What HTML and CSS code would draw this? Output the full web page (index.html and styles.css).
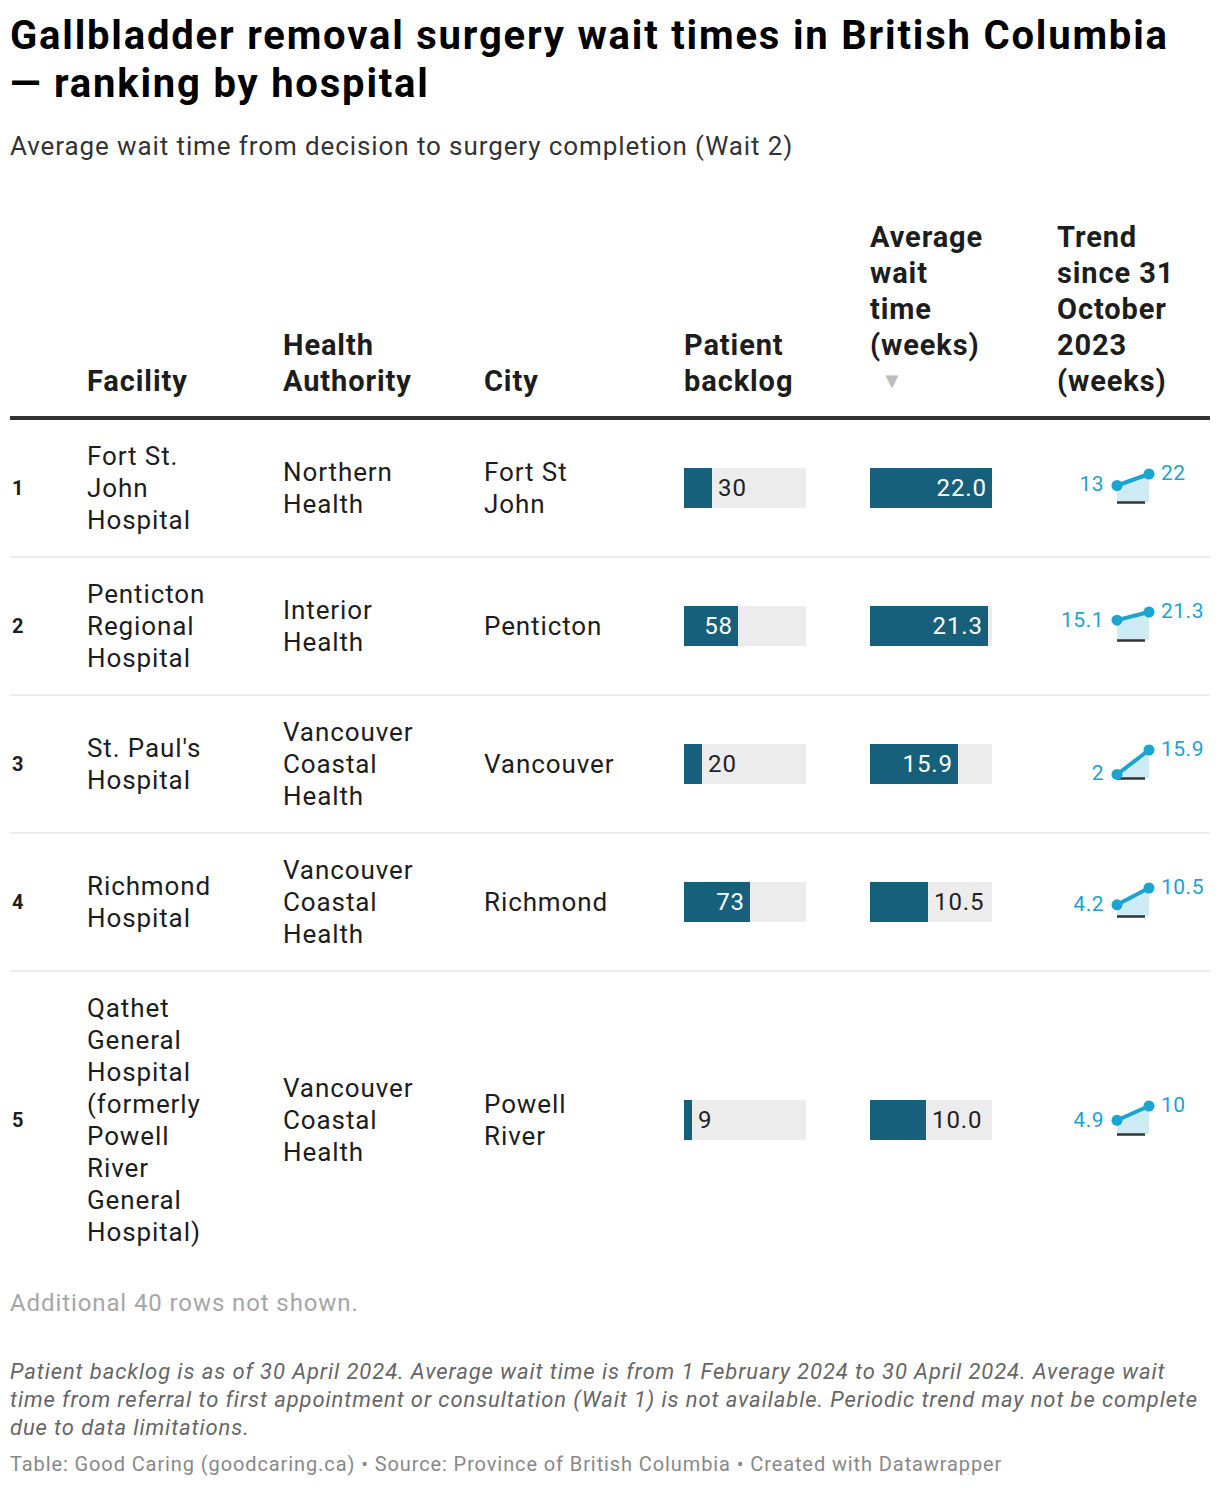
FILE: index.html
```html
<!DOCTYPE html>
<html lang="en">
<head>
<meta charset="utf-8">
<title>Gallbladder removal surgery wait times</title>
<link rel="stylesheet" href="styles.css">
</head>
<body>
<div class="wrap">
  <h1 class="title">Gallbladder removal surgery wait times in British Columbia —&nbsp;ranking by hospital</h1>
  <p class="subtitle">Average wait time from decision to surgery completion (Wait 2)</p>

  <div class="table">
    <div class="row head">
      <div class="c rank"></div>
      <div class="c txt">Facility</div>
      <div class="c txt">Health Authority</div>
      <div class="c txt">City</div>
      <div class="c txt">Patient backlog</div>
      <div class="c txt narrow">Average wait time (weeks)<span class="sort">▼</span></div>
      <div class="c txt">Trend since 31 October 2023 (weeks)</div>
    </div>

    <div class="row">
      <div class="c rank">1</div>
      <div class="c txt">Fort St. John Hospital</div>
      <div class="c txt">Northern Health</div>
      <div class="c txt">Fort St John</div>
      <div class="c"><div class="track"><div class="fill" style="width:28px"></div><span class="lbl out">30</span></div></div>
      <div class="c"><div class="track"><div class="fill" style="width:122px"><span class="lbl in">22.0</span></div></div></div>
      <div class="c trend">
        <svg class="spark" width="153" height="56" viewBox="0 0 153 56">
          <polygon class="area" points="60,25.5 92,14 92,42 60,42"/>
          <line class="base" x1="60" y1="42.5" x2="88" y2="42.5"/>
          <polyline class="ln" points="60,25.5 92,14"/>
          <circle class="dot" cx="60" cy="25.5" r="5.5"/>
          <circle class="dot" cx="92" cy="14" r="5.5"/>
          <text class="sl" x="47" y="23" text-anchor="end" dy="0.36em">13</text>
          <text class="sl" x="104" y="12" dy="0.36em">22</text>
        </svg>
      </div>
    </div>

    <div class="row">
      <div class="c rank">2</div>
      <div class="c txt">Penticton Regional Hospital</div>
      <div class="c txt">Interior Health</div>
      <div class="c txt">Penticton</div>
      <div class="c"><div class="track"><div class="fill" style="width:54px"><span class="lbl in">58</span></div></div></div>
      <div class="c"><div class="track"><div class="fill" style="width:118px"><span class="lbl in">21.3</span></div></div></div>
      <div class="c trend">
        <svg class="spark" width="153" height="56" viewBox="0 0 153 56">
          <polygon class="area" points="60,22.15 92,14 92,42 60,42"/>
          <line class="base" x1="60" y1="42.5" x2="88" y2="42.5"/>
          <polyline class="ln" points="60,22.15 92,14"/>
          <circle class="dot" cx="60" cy="22.15" r="5.5"/>
          <circle class="dot" cx="92" cy="14" r="5.5"/>
          <text class="sl" x="47" y="21" text-anchor="end" dy="0.36em">15.1</text>
          <text class="sl" x="104" y="12" dy="0.36em">21.3</text>
        </svg>
      </div>
    </div>

    <div class="row">
      <div class="c rank">3</div>
      <div class="c txt">St. Paul's Hospital</div>
      <div class="c txt">Vancouver Coastal Health</div>
      <div class="c txt">Vancouver</div>
      <div class="c"><div class="track"><div class="fill" style="width:18px"></div><span class="lbl out">20</span></div></div>
      <div class="c"><div class="track"><div class="fill" style="width:88px"><span class="lbl in">15.9</span></div></div></div>
      <div class="c trend">
        <svg class="spark" width="153" height="56" viewBox="0 0 153 56">
          <polygon class="area" points="60,38.48 92,14 92,42 60,42"/>
          <line class="base" x1="60" y1="42.5" x2="88" y2="42.5"/>
          <polyline class="ln" points="60,38.48 92,14"/>
          <circle class="dot" cx="60" cy="38.48" r="5.5"/>
          <circle class="dot" cx="92" cy="14" r="5.5"/>
          <text class="sl" x="47" y="36" text-anchor="end" dy="0.36em">2</text>
          <text class="sl" x="104" y="12" dy="0.36em">15.9</text>
        </svg>
      </div>
    </div>

    <div class="row">
      <div class="c rank">4</div>
      <div class="c txt">Richmond Hospital</div>
      <div class="c txt">Vancouver Coastal Health</div>
      <div class="c txt">Richmond</div>
      <div class="c"><div class="track"><div class="fill" style="width:66px"><span class="lbl in">73</span></div></div></div>
      <div class="c"><div class="track"><div class="fill" style="width:58px"></div><span class="lbl out">10.5</span></div></div>
      <div class="c trend">
        <svg class="spark" width="153" height="56" viewBox="0 0 153 56">
          <polygon class="area" points="60,30.8 92,14 92,42 60,42"/>
          <line class="base" x1="60" y1="42.5" x2="88" y2="42.5"/>
          <polyline class="ln" points="60,30.8 92,14"/>
          <circle class="dot" cx="60" cy="30.8" r="5.5"/>
          <circle class="dot" cx="92" cy="14" r="5.5"/>
          <text class="sl" x="47" y="29" text-anchor="end" dy="0.36em">4.2</text>
          <text class="sl" x="104" y="12" dy="0.36em">10.5</text>
        </svg>
      </div>
    </div>

    <div class="row">
      <div class="c rank">5</div>
      <div class="c txt">Qathet General Hospital (formerly Powell River General Hospital)</div>
      <div class="c txt">Vancouver Coastal Health</div>
      <div class="c txt">Powell River</div>
      <div class="c"><div class="track"><div class="fill" style="width:8px"></div><span class="lbl out">9</span></div></div>
      <div class="c"><div class="track"><div class="fill" style="width:56px"></div><span class="lbl out">10.0</span></div></div>
      <div class="c trend">
        <svg class="spark" width="153" height="56" viewBox="0 0 153 56">
          <polygon class="area" points="60,28.28 92,14 92,42 60,42"/>
          <line class="base" x1="60" y1="42.5" x2="88" y2="42.5"/>
          <polyline class="ln" points="60,28.28 92,14"/>
          <circle class="dot" cx="60" cy="28.28" r="5.5"/>
          <circle class="dot" cx="92" cy="14" r="5.5"/>
          <text class="sl" x="47" y="27" text-anchor="end" dy="0.36em">4.9</text>
          <text class="sl" x="104" y="12" dy="0.36em">10</text>
        </svg>
      </div>
    </div>
  </div>

  <p class="more">Additional 40 rows not shown.</p>
  <p class="notes">Patient backlog is as of 30 April 2024. Average wait time is from 1 February 2024 to 30 April 2024. Average wait time from referral to first appointment or consultation (Wait 1) is not available. Periodic trend may not be complete due to data limitations.</p>
  <p class="credit">Table: Good Caring (goodcaring.ca) • Source: Province of British Columbia • Created with Datawrapper</p>
</div>
</body>
</html>
```

FILE: styles.css
```css
html, body {
  margin: 0;
  padding: 0;
  background: #ffffff;
}

body {
  font-family: Roboto, "Liberation Sans", sans-serif;
  color: #1d1d1d;
  letter-spacing: 0.9px;
}

.wrap {
  padding: 12px 10px 0 10px;
}

.title {
  margin: 0;
  font-size: 40px;
  line-height: 48px;
  font-weight: 700;
  color: #000;
  letter-spacing: 1.8px;
}

.subtitle {
  margin: 22px 0 0 0;
  font-size: 26px;
  line-height: 32px;
  color: #333;
}

.table {
  margin-top: 57px;
}

.row {
  display: grid;
  grid-template-columns: 77px 196px 201px 200px 186px 187px 153px;
  align-items: center;
  padding: 20px 0;
  border-bottom: 2px solid #ececec;
  font-size: 26px;
  line-height: 32px;
}

.row:last-child {
  border-bottom: none;
}

.row.head {
  align-items: end;
  padding: 0 0 17px 0;
  border-bottom: 4px solid #333;
  font-size: 29px;
  line-height: 36px;
  font-weight: 700;
  color: #1d1d1d;
}

.c.txt {
  max-width: 140px;
}

.c.txt.narrow {
  max-width: 120px;
}

.rank {
  font-size: 20px;
  font-weight: 700;
  padding-left: 2px;
}

.sort {
  display: block;
  color: #bbbbbb;
  font-size: 22px;
  padding-left: 11px;
}

.track {
  width: 122px;
  height: 40px;
  background: #ececec;
  display: flex;
  align-items: center;
}

.fill {
  height: 40px;
  background: #17607b;
  display: flex;
  align-items: center;
  justify-content: flex-end;
  flex: none;
}

.lbl {
  font-size: 24px;
  line-height: 40px;
}

.lbl.in {
  color: #ffffff;
  padding-right: 5px;
}

.lbl.out {
  color: #222;
  padding-left: 6px;
}

.trend {
  display: flex;
  align-items: center;
}

.spark {
  display: block;
  overflow: visible;
}

.spark .area {
  fill: #cdebf5;
}

.spark .base {
  stroke: #333;
  stroke-width: 2.5;
}

.spark .ln {
  fill: none;
  stroke: #1ba3d2;
  stroke-width: 4;
}

.spark .dot {
  fill: #1ba3d2;
}

.spark .sl {
  font-family: Roboto, "Liberation Sans", sans-serif;
  font-size: 21px;
  fill: #1ba3d2;
  letter-spacing: 0.5px;
}

.more {
  margin: 20px 0 0 0;
  font-size: 24px;
  line-height: 30px;
  color: #a6a6a6;
}

.notes {
  margin: 40px 0 0 0;
  font-size: 22px;
  line-height: 28px;
  font-style: italic;
  color: #666;
}

.credit {
  margin: 10px 0 0 0;
  font-size: 20px;
  line-height: 24px;
  color: #888;
}
```
